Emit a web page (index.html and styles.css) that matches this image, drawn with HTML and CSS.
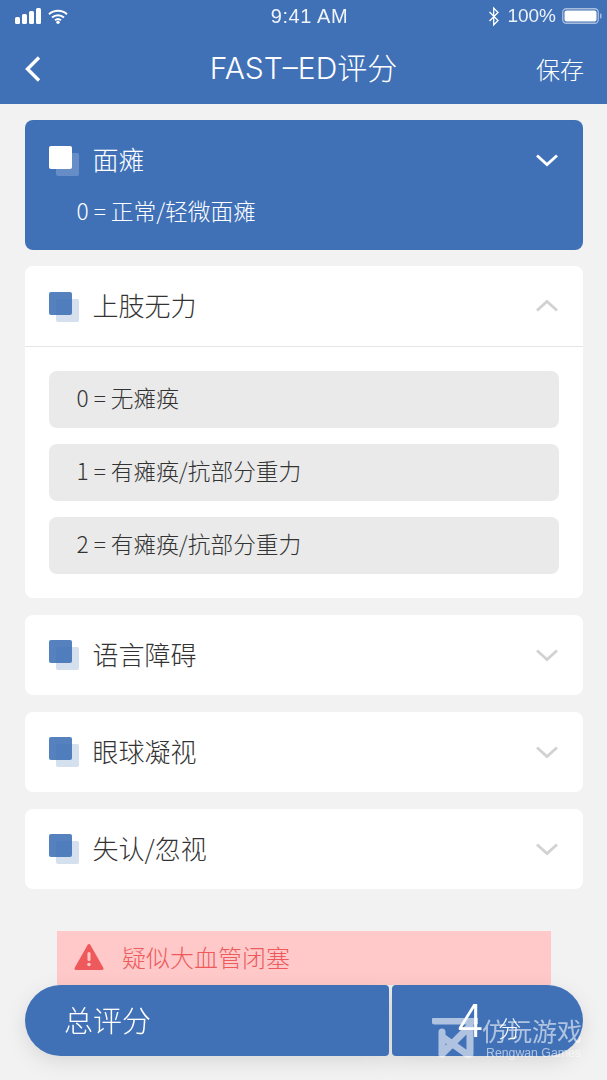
FILE: index.html
```html
<!DOCTYPE html>
<html lang="zh">
<head>
<meta charset="utf-8">
<title>FAST-ED评分</title>
<link rel="stylesheet" href="styles.css">
</head>
<body>
<div class="screen">
  <header class="top">
    <div class="status">
      <div class="status-left">
        <svg class="signal" width="27" height="16" viewBox="0 0 27 16"><rect x="0" y="9" width="5" height="7" rx="1.500"/><rect x="7" y="6" width="5" height="10" rx="1.500"/><rect x="14" y="3" width="5" height="13" rx="1.500"/><rect x="21" y="0" width="5" height="16" rx="1.500"/></svg>
        <svg class="wifi" width="20" height="15" viewBox="0 0 20 15"><path d="M1 5.200C6 .6 14 .6 19 5.200M4 8.400c3.400-3 8.600-3 12 0M7 11.300c1.700-1.400 4.300-1.400 6 0" fill="none" stroke="#fff" stroke-width="2"/><circle cx="10" cy="13.300" r="1.700" fill="#fff"/></svg>
      </div>
      <div class="clock">9:41 AM</div>
      <div class="status-right">
        <svg width="12" height="21" viewBox="0 0 12 20"><path d="M1.500 5.500l8.500 8.500-4.300 4.500V1.500L10 6l-8.500 8.500" fill="none" stroke="#fff" stroke-width="1.300"/></svg>
        <span class="pct">100%</span>
        <svg width="42" height="18" viewBox="0 0 42 18"><rect x=".75" y="1.750" width="35.500" height="14.500" rx="3.500" fill="none" stroke="#a9bedd" stroke-width="1.300"/><rect x="2.500" y="3.500" width="32" height="11" rx="2" fill="#fff"/><rect x="38" y="6.500" width="1.500" height="5" rx=".7" fill="#a9bedd"/></svg>
      </div>
    </div>
    <div class="nav">
      <svg class="back" width="20" height="30" viewBox="0 0 20 30"><path d="M16 3.500L4.500 15 16 26.500" fill="none" stroke="#fff" stroke-width="3.400"/></svg>
      <div class="nav-title">FAST–ED评分</div>
      <div class="nav-save">保存</div>
    </div>
  </header>

  <main class="list">
    <section class="card card-on">
      <div class="card-head">
        <span class="mark mark-light"></span>
        <span class="card-title">面瘫</span>
        <svg class="chev" width="24" height="14" viewBox="0 0 24 14"><path d="M2 2.500l10 9 10-9" fill="none" stroke="#fff" stroke-width="2.800"/></svg>
      </div>
      <div class="card-value">0 = 正常/轻微面瘫</div>
    </section>

    <section class="card">
      <div class="card-head card-head-line">
        <span class="mark"></span>
        <span class="card-title">上肢无力</span>
        <svg class="chev" width="24" height="14" viewBox="0 0 24 14"><path d="M2 11.500l10-9 10 9" fill="none" stroke="#d2d2d2" stroke-width="2.800"/></svg>
      </div>
      <div class="options">
        <div class="option">0 = 无瘫痪</div>
        <div class="option">1 = 有瘫痪/抗部分重力</div>
        <div class="option">2 = 有瘫痪/抗部分重力</div>
      </div>
    </section>

    <section class="card">
      <div class="card-head">
        <span class="mark"></span>
        <span class="card-title">语言障碍</span>
        <svg class="chev" width="24" height="14" viewBox="0 0 24 14"><path d="M2 2.500l10 9 10-9" fill="none" stroke="#d2d2d2" stroke-width="2.800"/></svg>
      </div>
    </section>

    <section class="card">
      <div class="card-head">
        <span class="mark"></span>
        <span class="card-title">眼球凝视</span>
        <svg class="chev" width="24" height="14" viewBox="0 0 24 14"><path d="M2 2.500l10 9 10-9" fill="none" stroke="#d2d2d2" stroke-width="2.800"/></svg>
      </div>
    </section>

    <section class="card">
      <div class="card-head">
        <span class="mark"></span>
        <span class="card-title">失认/忽视</span>
        <svg class="chev" width="24" height="14" viewBox="0 0 24 14"><path d="M2 2.500l10 9 10-9" fill="none" stroke="#d2d2d2" stroke-width="2.800"/></svg>
      </div>
    </section>
  </main>

  <div class="alert">
    <svg width="30" height="28" viewBox="0 0 30 28"><path d="M15 2.500L28 25.500H2z" fill="#ee5a5c" stroke="#ee5a5c" stroke-width="3" stroke-linejoin="round"/><rect x="13.500" y="9" width="3" height="9" rx="1.500" fill="#ffc9c9"/><circle cx="15" cy="21.500" r="1.800" fill="#ffc9c9"/></svg>
    <span>疑似大血管闭塞</span>
  </div>

  <div class="score">
    <div class="score-label">总评分</div>
    <div class="score-value"><span class="num">4</span><span class="unit">分</span></div>
  </div>

  <div class="wm">
    <svg class="wm-logo" width="46" height="40" viewBox="0 0 46 40"><path d="M3 3H44M10 14V36M38 10V36M10 36L38 8M12 20L36 37" fill="none" stroke="#fff" stroke-width="7" stroke-linecap="round"/></svg>
    <div class="wm-text"><div class="wm-cn">仿玩游戏</div><div class="wm-en">Rengwan Games</div></div>
  </div>
</div>
</body>
</html>
```

FILE: styles.css
```css
* { box-sizing: border-box; }
html, body { margin: 0; padding: 0; }
body { background: #f2f2f2; font-family: "Noto Sans CJK SC", "Liberation Sans", sans-serif; }
.screen { position: relative; width: 607px; height: 1080px; overflow: hidden; background: #f2f2f2; }
.top { height: 104px; background: #4071b7; color: #fff; }
.status { height: 34px; padding: 0 3px 2px 15px; display: grid; grid-template-columns: 1fr auto 1fr; align-items: center; }
.status-left { display: flex; align-items: center; gap: 6px; }
.signal rect { fill: #fff; }
.clock { font: 20px "Liberation Sans", sans-serif; opacity: .92; letter-spacing: .6px; }
.status-right { display: flex; align-items: center; justify-content: flex-end; gap: 7px; }
.status-right svg:last-child { margin-left: -1px; }
.pct { font: 19px "Liberation Sans", sans-serif; opacity: .9; }
.nav { height: 70px; display: flex; align-items: center; justify-content: space-between; position: relative; padding: 0 23px; }
.nav-title { position: absolute; left: 0; right: 0; top: -1px; text-align: center; font-family: "Inter", "Noto Sans CJK SC", sans-serif; font-size: 30px; font-weight: 300; line-height: 70px; }
.nav-save { font-size: 24px; font-weight: 300; position: relative; padding-bottom: 2px; }
.list { padding: 16px 24px 0 24.500px; display: flex; flex-direction: column; gap: 16.500px; }
.card { background: #fff; border-radius: 8px; }
.card-on { background: #4071b7; color: #fff; height: 129.500px; }
.card-head { height: 80.500px; display: flex; align-items: center; padding: 0 24px; gap: 17px; color: #333; }
.card-on .card-head { color: #fff; height: 80px; }
.card-head-line { height: 81px; border-bottom: 1px solid #e6e6e6; }
.card-title { flex: 1; font-size: 26px; font-weight: 300; line-height: 1; padding-bottom: 1px; }
.card-on .card-title, .card-head-line .card-title { padding-bottom: 3px; }
.mark { position: relative; width: 23px; height: 23px; border-radius: 2px; background: #5582bf; margin-right: 4px; transform: translateY(-3px); }
.mark::after { content: ""; position: absolute; left: 7px; top: 7px; width: 23px; height: 23px; border-radius: 2px; background: rgba(64, 113, 183, .22); }
.mark-light { background: #fff; }
.mark-light::after { background: rgba(255, 255, 255, .2); }
.chev { flex: none; }
.card-value { padding-left: 52px; margin-top: -4px; font-size: 22.700px; font-weight: 300; line-height: 30px; }
.options { padding: 24px; display: flex; flex-direction: column; gap: 16px; }
.option { height: 57px; border-radius: 8px; background: #eaeaea; padding-left: 28px; font-size: 22.700px; font-weight: 300; line-height: 53px; color: #333; }
.alert { position: absolute; left: 57px; top: 931px; width: 494px; height: 54px; background: #ffc9c9; color: #ee5a5c; display: flex; align-items: center; padding: 0 0 3px 17px; gap: 19px; font-size: 24px; font-weight: 300; }
.alert svg { margin-right: -1px; }
.score { position: absolute; left: 25px; top: 985px; width: 558px; height: 71px; display: flex; gap: 3px; color: #fff; filter: drop-shadow(0 6px 10px rgba(0, 0, 0, .1)); }
.score-label { width: 364px; background: #4071b7; border-radius: 36px 4px 4px 36px; padding-left: 39px; font-size: 29px; font-weight: 300; line-height: 68px; }
.score-value { flex: 1; background: #4071b7; border-radius: 4px 36px 36px 4px; display: flex; align-items: baseline; padding: 6px 0 0 64px; line-height: 60px; font-weight: 300; }
.num { font: 300 45px/60px "Inter", "Liberation Sans", sans-serif; }
.unit { font-size: 23px; margin-left: 14px; }
.wm { position: absolute; left: 432px; top: 1016px; display: flex; gap: 4px; opacity: .58; color: #fff; }
.wm-logo { margin-top: 2px; }
.wm-text { display: flex; flex-direction: column; }
.wm-cn { font-size: 25px; line-height: 29px; font-weight: 400; white-space: nowrap; }
.wm-en { font: 12.300px/16px "Liberation Sans", sans-serif; padding-left: 4px; white-space: nowrap; }
```
